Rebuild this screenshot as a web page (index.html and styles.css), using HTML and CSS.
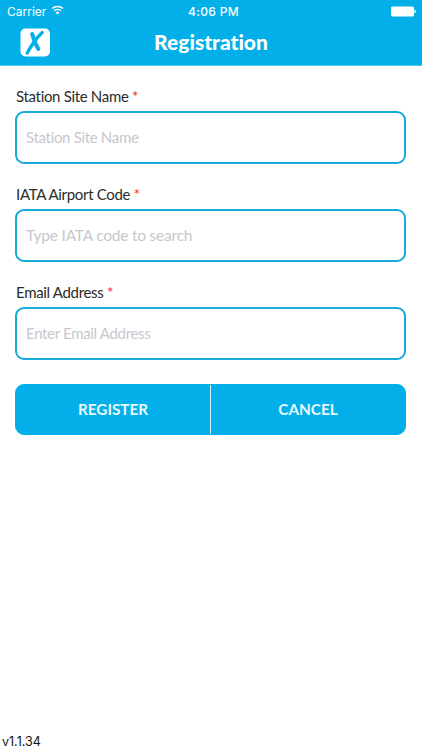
FILE: index.html
```html
<!DOCTYPE html>
<html lang="en">
<head>
  <meta charset="UTF-8">
  <meta name="viewport" content="width=device-width, initial-scale=1.0">
  <title>Registration</title>
  <link rel="stylesheet" href="styles.css">
</head>
<body>
  <header class="header">
    <div class="status-bar">
      <div class="carrier">
        <span>Carrier</span>
        <svg class="wifi" viewBox="0 0 13 10" width="13" height="10">
          <path d="M1 3.6a8.2 8.2 0 0 1 11 0M3 5.8a5.2 5.2 0 0 1 7 0" fill="none" stroke="#fff" stroke-width="1.4"/>
          <path d="M4.6 7.4a2.9 2.9 0 0 1 3.8 0L6.5 9.4z" fill="#fff"/>
        </svg>
      </div>
      <span class="time">4:06 PM</span>
      <div class="battery-wrap">
        <svg viewBox="0 0 26 11" width="26" height="11">
          <rect x="1" y="0.5" width="23" height="10" rx="1.5" fill="#fff"/>
          <rect x="24.300" y="4" width="1.5" height="3" rx="0.7" fill="#fff"/>
        </svg>
      </div>
    </div>
    <div class="nav-bar">
      <svg class="logo" viewBox="0 0 30 29" width="30" height="29">
        <rect x="0.5" y="0.5" width="29.5" height="28" rx="5" fill="#fff"/>
        <path d="M22.2 4.6C17 9.5 12 16.5 7.2 25" fill="none" stroke="#03afe8" stroke-width="3.4" stroke-linecap="round"/>
        <path d="M12.2 6C13.5 11.5 15.5 16.5 18.3 21" fill="none" stroke="#03afe8" stroke-width="4" stroke-linecap="round"/>
      </svg>
      <h1>Registration</h1>
    </div>
  </header>

  <form class="form">
    <label for="station">Station Site Name <span class="required">*</span></label>
    <input type="text" id="station" placeholder="Station Site Name">

    <label for="airport">IATA Airport Code <span class="required">*</span></label>
    <input type="text" id="airport" class="wide" placeholder="Type IATA code to search">

    <label for="email">Email Address <span class="required">*</span></label>
    <input type="email" id="email" placeholder="Enter Email Address">

    <div class="buttons">
      <button type="button">REGISTER</button>
      <button type="button">CANCEL</button>
    </div>
  </form>

  <footer class="version">v1.1.34</footer>
</body>
</html>
```

FILE: styles.css
```css
* {
  box-sizing: border-box;
}

body {
  margin: 0;
  height: 750px;
  display: flex;
  flex-direction: column;
  font-family: Lato, sans-serif;
  font-variant-ligatures: none;
  background-color: #fff;
  overflow: hidden;
}

.header {
  height: 66px;
  background-color: #03afe8;
  border-bottom: 1px solid #4dc4ec;
  color: #fff;
}

.status-bar {
  display: grid;
  grid-template-columns: 1fr auto 1fr;
  align-items: center;
  height: 22px;
  padding: 0 6px 0 7px;
  font-family: Inter, sans-serif;
  font-size: 12px;
}

.carrier {
  display: flex;
  align-items: center;
  gap: 5px;
}

.wifi {
  margin-top: -2px;
}

.time {
  font-weight: 500;
  letter-spacing: 0.3px;
  padding-left: 4px;
}

.battery-wrap {
  display: flex;
  justify-content: flex-end;
}

.nav-bar {
  display: grid;
  grid-template-columns: 30px 1fr 30px;
  align-items: center;
  height: 41px;
  padding: 0 20px;
}

.nav-bar h1 {
  margin: 0;
  padding-bottom: 2px;
  font-size: 21px;
  font-weight: 900;
  text-align: center;
}

.form {
  flex: 1;
  padding: 19px 15px 0;
}

label {
  display: block;
  height: 26px;
  padding-left: 1px;
  line-height: 22px;
  font-size: 15px;
  letter-spacing: -0.32px;
  color: #2b2b2b;
}

.required {
  color: #f0232b;
}

input {
  display: block;
  width: 391px;
  height: 53px;
  margin: 0 0 18.8px;
  padding: 0 9px 1px;
  border: 2px solid #14aada;
  border-radius: 9px;
  background-color: #fff;
  font-family: inherit;
  font-variant-ligatures: none;
  font-size: 15px;
  letter-spacing: -0.32px;
}

input::placeholder {
  color: #c7c7cd;
  opacity: 1;
}

input.wide {
  font-size: 15.5px;
  letter-spacing: -0.22px;
}

.buttons {
  display: flex;
  width: 391px;
  height: 51px;
  margin-top: 24px;
  border: 1px solid #03afe8;
  border-radius: 9px;
  background-color: #03afe8;
}

button {
  flex: 1;
  padding: 0 0 1px;
  border: none;
  background: none;
  color: #e9faff;
  font-family: inherit;
  font-size: 15.3px;
  font-weight: bold;
}

button + button {
  border-left: 1px solid #d5f2fb;
}

.version {
  height: 17px;
  padding-left: 2px;
  font-family: Inter, sans-serif;
  font-size: 12.5px;
  line-height: 18px;
  color: #111;
}
```
